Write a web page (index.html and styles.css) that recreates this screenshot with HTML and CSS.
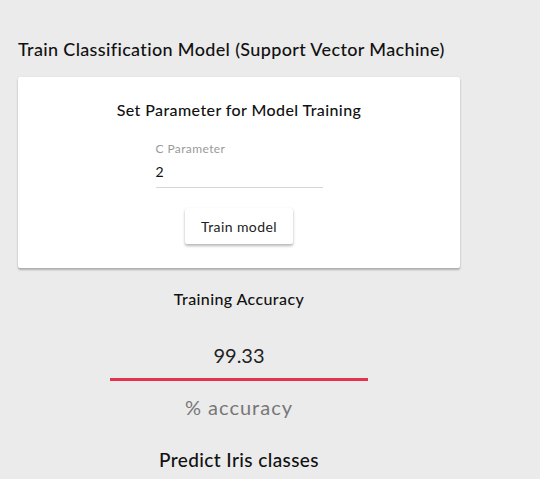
FILE: index.html
```html
<!DOCTYPE html>
<html>
<head>
<meta charset="utf-8">
<link rel="stylesheet" href="styles.css">
</head>
<body>
<main class="page">
  <h2 class="page-title">Train Classification Model (Support Vector Machine)</h2>
  <section class="card">
    <h3 class="card-title">Set Parameter for Model Training</h3>
    <div class="field">
      <label class="field-label">C Parameter</label>
      <div class="field-value">2</div>
    </div>
    <button class="btn">Train model</button>
  </section>
  <section class="result">
    <h3 class="result-title">Training Accuracy</h3>
    <div class="metric">
      <div class="metric-value">99.33</div>
      <div class="metric-bar"></div>
      <div class="metric-unit">% accuracy</div>
    </div>
    <h2 class="next-title">Predict Iris classes</h2>
  </section>
</main>
</body>
</html>
```
FILE: styles.css
```css
* { box-sizing: border-box; }
html, body { margin: 0; padding: 0; background: #ebebeb; }
body {
  font-family: "Lato", "Open Sans", sans-serif;
  color: #111;
  overflow: hidden;
}
.page {
  width: 442px;
  margin-left: 18px;
  padding-top: 38px;
  display: flex;
  flex-direction: column;
}
.page-title {
  margin: 0;
  font-size: 18px;
  font-weight: 500;
  line-height: 22px;
  letter-spacing: 0.35px;
}
.card {
  margin-top: 17px;
  background: #fff;
  border-radius: 2px;
  box-shadow: 0 2px 2px rgba(0,0,0,0.25), 0 0 2px rgba(0,0,0,0.08);
  height: 191px;
  display: flex;
  flex-direction: column;
  align-items: center;
  padding-top: 23px;
}
.card-title {
  margin: 0;
  font-size: 16px;
  font-weight: 500;
  line-height: 20px;
  letter-spacing: 0.4px;
}
.field {
  margin-top: 21px;
  width: 167px;
  border-bottom: 1px solid #d6d6d6;
  padding-bottom: 7px;
}
.field-label {
  display: block;
  font-size: 12px;
  color: #9a9a9a;
  line-height: 15px;
  letter-spacing: 0.4px;
}
.field-value {
  margin-top: 7px;
  font-size: 14px;
  line-height: 17px;
}
.btn {
  margin-top: 20px;
  width: 108px;
  height: 36px;
  border: none;
  background: #fff;
  border-radius: 2px;
  box-shadow: 0 2px 3px rgba(0,0,0,0.28), 0 0 1px rgba(0,0,0,0.1);
  font-family: inherit;
  font-size: 14px;
  letter-spacing: 0.4px;
  color: #222;
}
.result {
  display: flex;
  flex-direction: column;
  align-items: center;
  padding-top: 21px;
}
.result-title {
  margin: 0;
  font-size: 16px;
  font-weight: 500;
  line-height: 20px;
  letter-spacing: 0.4px;
}
.metric {
  display: flex;
  flex-direction: column;
  align-items: center;
  margin-top: 33px;
}
.metric-value {
  font-size: 20px;
  line-height: 26px;
  color: #222;
}
.metric-bar {
  margin-top: 10px;
  width: 258px;
  height: 3px;
  background: #e3334e;
}
.metric-unit {
  margin-top: 14px;
  font-size: 20px;
  line-height: 24px;
  letter-spacing: 1px;
  color: #777;
}
.next-title {
  margin: 30px 0 0;
  font-size: 19px;
  font-weight: 500;
  line-height: 22px;
  letter-spacing: 0.4px;
}
```
